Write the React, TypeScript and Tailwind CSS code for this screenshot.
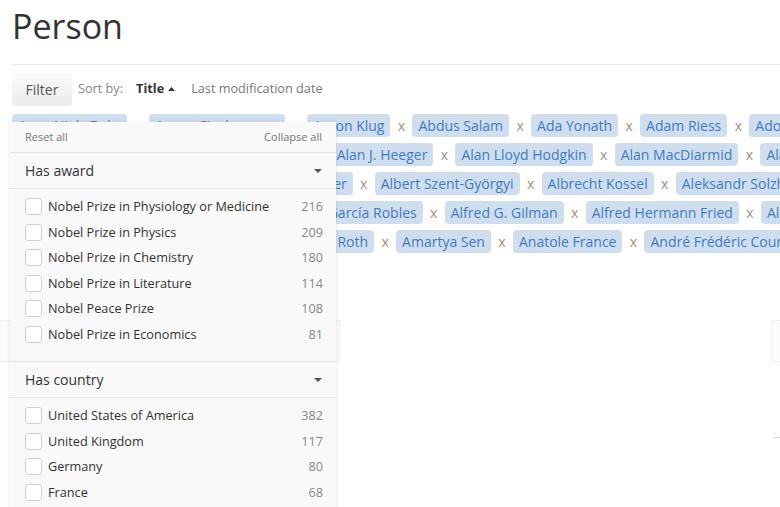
import React from 'react';

// Tag rows behind the filter dropdown, left-most ones are hidden by the panel
const tagRows: { offset: string; names: string[] }[] = [
  { offset: 'ml-0', names: ['Aage Niels Bohr', 'Aaron Ciechanover', 'Aaron Klug', 'Abdus Salam', 'Ada Yonath', 'Adam Riess', 'Adolf Butenandt'] },
  { offset: 'ml-[48px]', names: ['Adolf von Baeyer', 'Ahmed Zewail', 'Alan J. Heeger', 'Alan Lloyd Hodgkin', 'Alan MacDiarmid', 'Alan Hodgkin'] },
  { offset: 'ml-[133px]', names: ['Al Gore', 'Albert Schweitzer', 'Albert Szent-Györgyi', 'Albrecht Kossel', 'Aleksandr Solzhenitsyn'] },
  { offset: 'ml-[142px]', names: ['Alexis Carrel', 'Alfonso García Robles', 'Alfred G. Gilman', 'Alfred Hermann Fried', 'Alfred Kastler'] },
  { offset: 'ml-[127px]', names: ['Allvar Gullstrand', 'Alvin E. Roth', 'Amartya Sen', 'Anatole France', 'André Frédéric Cournand'] },
];

const awards = [
  { label: 'Nobel Prize in Physiology or Medicine', count: 216 },
  { label: 'Nobel Prize in Physics', count: 209 },
  { label: 'Nobel Prize in Chemistry', count: 180 },
  { label: 'Nobel Prize in Literature', count: 114 },
  { label: 'Nobel Peace Prize', count: 108 },
  { label: 'Nobel Prize in Economics', count: 81 },
];

const countries = [
  { label: 'United States of America', count: 382 },
  { label: 'United Kingdom', count: 117 },
  { label: 'Germany', count: 80 },
  { label: 'France', count: 68 },
];

function Caret() {
  return (
    <svg width="8" height="4" viewBox="0 0 8 4" className="shrink-0">
      <path d="M0 0h8L4 4z" fill="#555" />
    </svg>
  );
}

function FacetGroup({ title, items }: { title: string; items: { label: string; count: number }[] }) {
  return (
    <div className="border-b border-[#e3e3e3]">
      <div className="flex items-center justify-between h-[36px] pl-[15px] pr-[14px] border-b border-dotted border-[#d8d8d8]">
        <span className="text-[14px] text-[#333]">{title}</span>
        <Caret />
      </div>
      <ul className="pt-[5px] pb-[14px] pl-[15px] pr-[13px]">
        {items.map(item => (
          <li key={item.label} className="flex items-center h-[25.5px]">
            <span className="w-[17px] h-[17px] bg-white border border-[#cfcfcf] rounded-[3px] shrink-0" />
            <span className="ml-[6px] text-[12.7px] text-[#333] flex-grow">{item.label}</span>
            <span className="text-[12.7px] text-[#888]">{item.count}</span>
          </li>
        ))}
      </ul>
    </div>
  );
}

export default function App() {
  return (
    <div className="relative w-[780px] h-[507px] overflow-hidden bg-white" style={{ fontFamily: '"Open Sans", sans-serif' }}>
      <div className="pl-[12px]">
        <h1 className="text-[34px] leading-[48px] text-[#333] pt-[2px]">Person</h1>
        <div className="mt-[14px] border-t border-[#eaeaea]" />

        {/* 정렬 툴바 */}
        <div className="flex items-center mt-[8px] h-[32px]">
          <button className="h-[32px] w-[60px] text-[14px] text-[#555] rounded-[3px] bg-gradient-to-b from-[#fbfbfb] to-[#ececec] shadow-[0_1px_1px_rgba(0,0,0,0.08)]">Filter</button>
          <span className="ml-[6px] text-[12.7px] text-[#888]">Sort by:</span>
          <span className="ml-[13px] text-[12.7px] font-bold text-[#333] flex items-center gap-[4px]">
            Title
            <svg width="7" height="4" viewBox="0 0 7 4"><path d="M0 4h7L3.5 0z" fill="#333" /></svg>
          </span>
          <span className="ml-[16px] text-[12.7px] text-[#777]">Last modification date</span>
        </div>

        {/* 태그 목록 */}
        <div className="mt-[9px] flex flex-col gap-[6px]">
          {tagRows.map((row, i) => (
            <div key={i} className={`flex items-center whitespace-nowrap ${row.offset}`}>
              {row.names.map((name, j) => (
                <React.Fragment key={name}>
                  {j > 0 && <span className="w-[22px] text-center text-[14px] text-[#a0917e] shrink-0">x</span>}
                  <span className="h-[23px] leading-[23px] px-[6px] rounded-[4px] bg-[#cfdeee] text-[14px] text-[#3d7cc0] shrink-0">{name}</span>
                </React.Fragment>
              ))}
            </div>
          ))}
        </div>
      </div>

      {/* 배경의 흐린 블록 */}
      <div className="flex mt-[67px]">
        <div className="w-[340px] h-[42px] border-t border-r border-b border-[#efefef] bg-[#fcfcfc]" />
        <div className="ml-auto w-[9px] h-[42px] border-t border-l border-b border-[#efefef] bg-[#fcfcfc]" />
      </div>
      <div className="flex mt-[75px]">
        <div className="ml-auto w-[7px] border-t border-[#dcdcdc]" />
      </div>

      {/* 필터 드롭다운 */}
      <div className="absolute left-[10px] top-[122px] w-[326px] h-[400px] bg-[#f9f9f9] shadow-[0_1px_4px_rgba(0,0,0,0.12)]">
        <div className="flex items-center justify-between h-[31px] pl-[15px] pr-[14px] border-b border-[#e3e3e3]">
          <span className="text-[11px] text-[#777]">Reset all</span>
          <span className="text-[11px] text-[#777]">Collapse all</span>
        </div>
        <FacetGroup title="Has award" items={awards} />
        <FacetGroup title="Has country" items={countries} />
      </div>
    </div>
  );
}
